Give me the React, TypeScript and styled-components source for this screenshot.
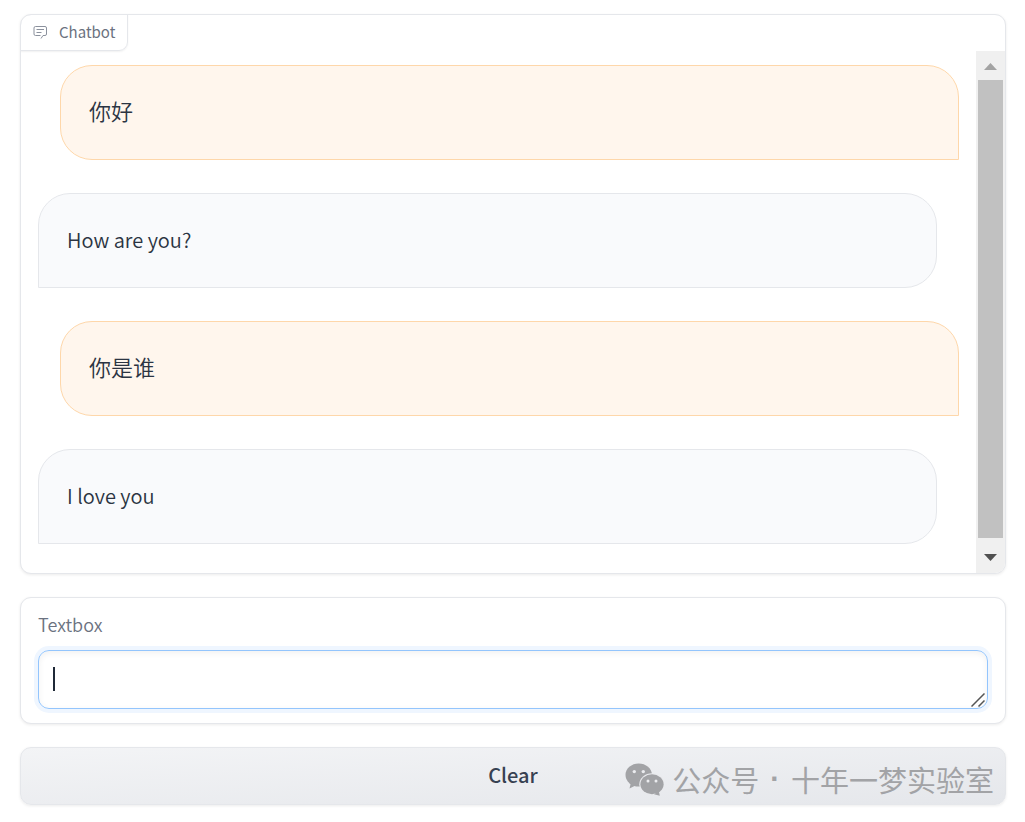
import React from "react";
import styled, { createGlobalStyle } from "styled-components";

const GlobalStyle = createGlobalStyle`
  *, *::before, *::after { box-sizing: border-box; }
  body {
    margin: 0;
    background: #ffffff;
    color: #1f2937;
    font-family: "Noto Sans CJK SC", "Noto Sans", sans-serif;
  }
`;

const Page = styled.main`
  display: flex;
  flex-direction: column;
  gap: 23px;
  padding: 14px 19px 16px 20px;
`;

const Panel = styled.section`
  border: 1px solid #e5e7eb;
  border-radius: 11px;
  background: #ffffff;
  box-shadow: 0 1px 3px rgba(0, 0, 0, 0.08);
  overflow: hidden;
`;

const PanelTag = styled.h2`
  display: flex;
  align-items: center;
  gap: 11px;
  width: max-content;
  height: 37px;
  margin: -1px 0 0 -1px;
  padding: 0 12px 2px;
  border: 1px solid #e5e7eb;
  border-radius: 11px 0 9px 0;
  box-shadow: 0 1px 2px rgba(0, 0, 0, 0.06);
  color: #6b7280;
  font-size: 15px;
  font-weight: 400;
  line-height: 24px;
`;

const ChatArea = styled.div`
  display: flex;
`;

const Messages = styled.div`
  flex: 1;
  display: flex;
  flex-direction: column;
  gap: 33px;
  padding: 14px 17px 29px;
`;

const Bubble = styled.p<{ $from: "user" | "bot" }>`
  margin: ${(p) => (p.$from === "user" ? "0 0 0 22px" : "0 22px 0 0")};
  padding: ${(p) => (p.$from === "user" ? "27px 28px 32px" : "29px 28px 30px")};
  border: 1px solid ${(p) => (p.$from === "user" ? "#fed7aa" : "#e5e7eb")};
  border-radius: ${(p) => (p.$from === "user" ? "32px 32px 0 32px" : "32px 32px 32px 0")};
  background: ${(p) => (p.$from === "user" ? "#fff6ed" : "#f9fafc")};
  color: #2b3442;
  font-size: ${(p) => (p.$from === "user" ? "22px" : "20px")};
  font-weight: 350;
  line-height: 34px;
`;

const Scrollbar = styled.div`
  display: flex;
  flex-direction: column;
  width: 29px;
  padding: 0 2px;
  background: #f0f0f0;
`;

const ScrollThumb = styled.div`
  flex: 1;
  background: #c1c1c1;
`;

const ScrollButton = styled.button<{ $tall?: boolean }>`
  display: flex;
  align-items: center;
  justify-content: center;
  height: ${(p) => (p.$tall ? "35px" : "29px")};
  padding: ${(p) => (p.$tall ? "4px 0 0" : "2px 0 0")};
  border: 0;
  background: transparent;
`;

const Form = styled.div`
  padding: 13px 17px 14px;
`;

const Label = styled.label`
  display: block;
  margin-bottom: 12px;
  color: #6b7280;
  font-size: 18px;
  font-weight: 350;
  line-height: 27px;
`;

const Field = styled.div`
  display: flex;
  align-items: center;
  height: 59px;
  padding: 0 0 1px 14px;
  border: 1px solid #93c5fd;
  border-radius: 11px;
  box-shadow: 0 0 0 4px #eff6ff, inset 0 2px 6px rgba(0, 0, 0, 0.06);
`;

const Caret = styled.span`
  width: 2px;
  height: 24px;
  background: #1f2937;
`;

const TextInput = styled.textarea`
  flex: 1;
  height: 34px;
  padding: 0;
  border: 0;
  outline: 0;
  resize: none;
  background: transparent;
  color: inherit;
  caret-color: transparent;
  font-family: inherit;
  font-size: 20px;
  line-height: 34px;
`;

const Grip = styled.svg`
  align-self: flex-end;
  margin-right: 2px;
`;

const Footer = styled.footer`
  position: relative;
`;

const ClearButton = styled.button`
  display: block;
  width: 100%;
  height: 58px;
  padding: 0 0 2px;
  border: 1px solid #e5e7eb;
  border-radius: 11px;
  background: linear-gradient(to bottom right, #f3f4f6, #e5e7eb);
  box-shadow: 0 1px 3px rgba(0, 0, 0, 0.08);
  color: #374151;
  font-family: inherit;
  font-size: 20px;
  font-weight: 500;
  line-height: 32px;
`;

const Watermark = styled.div`
  position: absolute;
  right: 12px;
  bottom: 6px;
  display: flex;
  align-items: center;
  gap: 8px;
  color: #a2a3a6;
  font-size: 29px;
  line-height: 40px;
  white-space: nowrap;
  pointer-events: none;
`;

const Dot = styled.span`
  margin: 0 3px;
  font-family: "Liberation Sans", sans-serif;
  font-weight: 700;
`;

const ChatIcon = () => (
  <svg width="15" height="15" viewBox="0 0 15 15" fill="none" stroke="#8b919d" strokeWidth="1" aria-hidden="true">
    <path d="M7.5 11.5H2.5A1.5 1.5 0 0 1 1 10V4A1.5 1.5 0 0 1 2.5 2.5H12A1.5 1.5 0 0 1 13.5 4V10A1.5 1.5 0 0 1 12 11.5H10L8 14.5" />
    <path d="M3.5 5.5H11M3.5 8.5H8.5" />
  </svg>
);

const WeChatIcon = () => (
  <svg width="39" height="33" viewBox="0 0 39 33" aria-hidden="true">
    <path fill="#a2a3a6" d="M3 17L5.6 21.1L4.5 25.5L9.5 22.9L16 21z" />
    <ellipse cx="13.7" cy="12" rx="13.2" ry="11.5" fill="#a2a3a6" />
    <ellipse cx="27" cy="21.3" rx="12.7" ry="11" fill="#e9eaed" />
    <ellipse cx="27" cy="21.3" rx="11.6" ry="10" fill="#a2a3a6" />
    <path fill="#a2a3a6" d="M29 31.2l5.8 1.5-1-4.7z" />
    <g fill="#ebecef">
      <circle cx="9.3" cy="8.6" r="1.7" />
      <circle cx="18.3" cy="8.6" r="1.7" />
      <circle cx="23" cy="18" r="1.5" />
      <circle cx="31" cy="18" r="1.5" />
    </g>
  </svg>
);

const messages: { from: "user" | "bot"; text: string }[] = [
  { from: "user", text: "你好" },
  { from: "bot", text: "How are you?" },
  { from: "user", text: "你是谁" },
  { from: "bot", text: "I love you" },
];

export default function App() {
  return (
    <>
      <GlobalStyle />
      <Page>
        <Panel>
          <PanelTag>
            <ChatIcon />
            Chatbot
          </PanelTag>
          <ChatArea>
            <Messages>
              {messages.map((m) => (
                <Bubble key={m.text} $from={m.from}>
                  {m.text}
                </Bubble>
              ))}
            </Messages>
            <Scrollbar>
              <ScrollButton aria-label="Scroll up">
                <svg width="13" height="7" viewBox="0 0 13 7" aria-hidden="true">
                  <path d="M0 7L6.5 0L13 7Z" fill="#a3a3a3" />
                </svg>
              </ScrollButton>
              <ScrollThumb />
              <ScrollButton $tall aria-label="Scroll down">
                <svg width="13" height="7" viewBox="0 0 13 7" aria-hidden="true">
                  <path d="M0 0L6.5 7L13 0Z" fill="#505050" />
                </svg>
              </ScrollButton>
            </Scrollbar>
          </ChatArea>
        </Panel>

        <Panel>
          <Form>
            <Label htmlFor="message">Textbox</Label>
            <Field>
              <Caret />
              <TextInput id="message" rows={1} />
              <Grip width="14" height="14" viewBox="0 0 14 14" stroke="#555555" strokeWidth="1.5" aria-hidden="true">
                <path d="M.5 13.5L13.5.5M7.5 13.5L13.5 7.5" />
              </Grip>
            </Field>
          </Form>
        </Panel>

        <Footer>
          <ClearButton>Clear</ClearButton>
          <Watermark>
            <WeChatIcon />
            <span>公众号</span>
            <Dot>·</Dot>
            <span>十年一梦实验室</span>
          </Watermark>
        </Footer>
      </Page>
    </>
  );
}
